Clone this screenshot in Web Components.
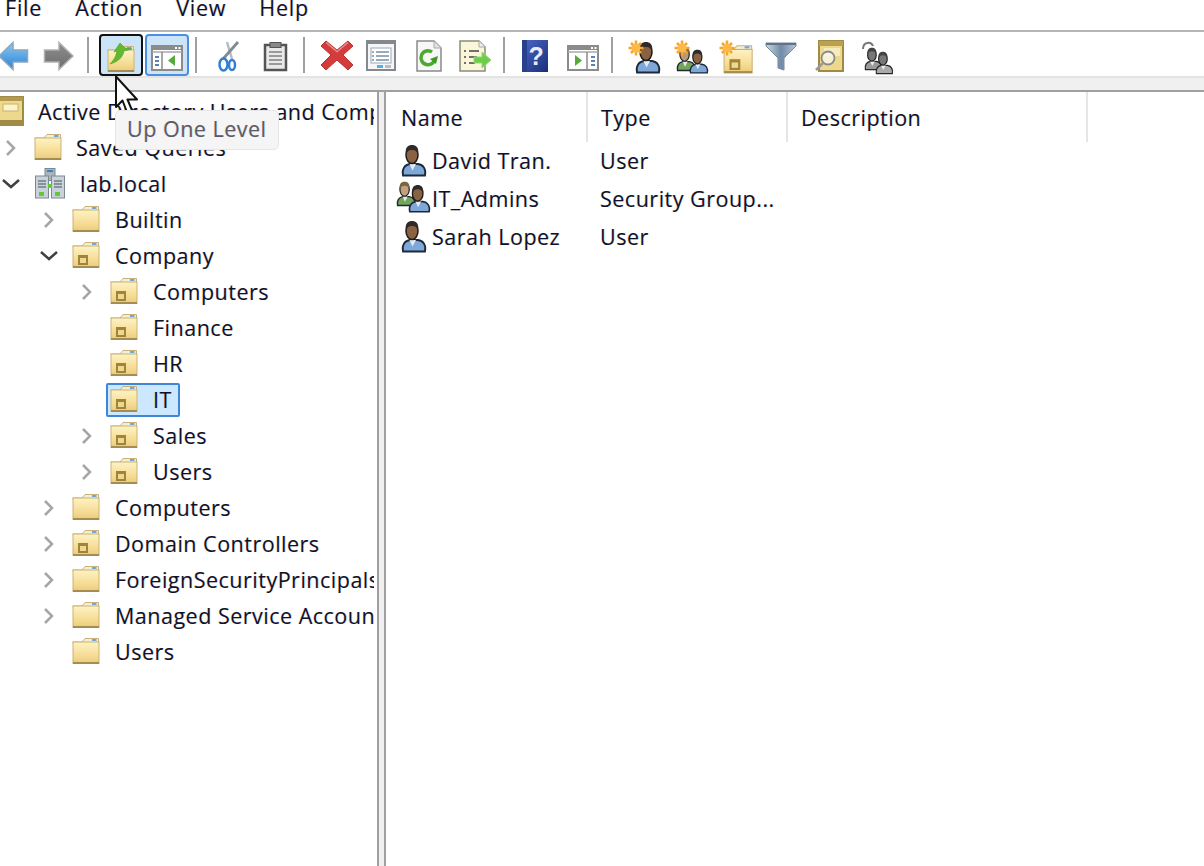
<!DOCTYPE html>
<html lang="en">
<head>
<meta charset="utf-8">
<title>Active Directory Users and Computers</title>
<style>
    html, body { margin: 0; height: 100%; background: #fff; overflow: hidden; }
    body {
        font-family: "Open Sans", "Noto Sans", "Liberation Sans", sans-serif;
        font-size: 21.5px;
        letter-spacing: .5px;
        color: #10102a;
        text-shadow: -.6px 0 rgba(255, 150, 0, .28), .6px 0 rgba(0, 130, 255, .28);
    }
</style>
</head>
<body>
<ad-console></ad-console>

<template id="console-template">
    <style>
        :host { display: flex; flex-direction: column; height: 866px; position: relative; overflow: hidden; }
        .panes { flex: 1; display: flex; min-height: 0; }
        .tree-pane { width: 374px; padding-right: 3px; border-right: 2px solid #a0a0a0; overflow: hidden; }
        .splitter { width: 5px; background: #f0f0f0; }
        .list-pane { flex: 1; border-left: 2px solid #a0a0a0; overflow: hidden; }
    </style>
    <ad-menu-bar>
        <ad-menu-item>File</ad-menu-item>
        <ad-menu-item>Action</ad-menu-item>
        <ad-menu-item>View</ad-menu-item>
        <ad-menu-item>Help</ad-menu-item>
    </ad-menu-bar>
    <ad-tool-bar>
        <ad-tool-button icon="back"></ad-tool-button>
        <ad-tool-button icon="forward"></ad-tool-button>
        <ad-tool-sep></ad-tool-sep>
        <ad-tool-button icon="up" state="focused"></ad-tool-button>
        <ad-tool-button icon="panel" state="checked"></ad-tool-button>
        <ad-tool-sep></ad-tool-sep>
        <ad-tool-button icon="cut"></ad-tool-button>
        <ad-tool-button icon="clipboard"></ad-tool-button>
        <ad-tool-sep></ad-tool-sep>
        <ad-tool-button icon="delete"></ad-tool-button>
        <ad-tool-button icon="props"></ad-tool-button>
        <ad-tool-button icon="refresh"></ad-tool-button>
        <ad-tool-button icon="export"></ad-tool-button>
        <ad-tool-sep></ad-tool-sep>
        <ad-tool-button icon="help"></ad-tool-button>
        <ad-tool-button icon="panel2"></ad-tool-button>
        <ad-tool-sep></ad-tool-sep>
        <ad-tool-button icon="newuser"></ad-tool-button>
        <ad-tool-button icon="newgroup"></ad-tool-button>
        <ad-tool-button icon="newou"></ad-tool-button>
        <ad-tool-button icon="filter"></ad-tool-button>
        <ad-tool-button icon="find"></ad-tool-button>
        <ad-tool-button icon="addgroup"></ad-tool-button>
    </ad-tool-bar>
    <div class="panes">
        <div class="tree-pane">
            <ad-tree>
                <ad-tree-row level="-1" icon="root">Active Directory Users and Computers</ad-tree-row>
                <ad-tree-row level="0" arrow="closed" icon="folder">Saved Queries</ad-tree-row>
                <ad-tree-row level="0" arrow="open" icon="domain">lab.local</ad-tree-row>
                <ad-tree-row level="1" arrow="closed" icon="folder">Builtin</ad-tree-row>
                <ad-tree-row level="1" arrow="open" icon="ou">Company</ad-tree-row>
                <ad-tree-row level="2" arrow="closed" icon="ou">Computers</ad-tree-row>
                <ad-tree-row level="2" icon="ou">Finance</ad-tree-row>
                <ad-tree-row level="2" icon="ou">HR</ad-tree-row>
                <ad-tree-row level="2" icon="ou" selected>IT</ad-tree-row>
                <ad-tree-row level="2" arrow="closed" icon="ou">Sales</ad-tree-row>
                <ad-tree-row level="2" arrow="closed" icon="ou">Users</ad-tree-row>
                <ad-tree-row level="1" arrow="closed" icon="folder">Computers</ad-tree-row>
                <ad-tree-row level="1" arrow="closed" icon="ou">Domain Controllers</ad-tree-row>
                <ad-tree-row level="1" arrow="closed" icon="folder">ForeignSecurityPrincipals</ad-tree-row>
                <ad-tree-row level="1" arrow="closed" icon="folder">Managed Service Accounts</ad-tree-row>
                <ad-tree-row level="1" icon="folder">Users</ad-tree-row>
            </ad-tree>
        </div>
        <div class="splitter"></div>
        <div class="list-pane">
            <ad-list-header></ad-list-header>
            <ad-list-row icon="user" type="User">David Tran.</ad-list-row>
            <ad-list-row icon="group" type="Security Group...">IT_Admins</ad-list-row>
            <ad-list-row icon="user" type="User">Sarah Lopez</ad-list-row>
        </div>
    </div>
    <ad-cursor></ad-cursor>
    <ad-tooltip>Up One Level</ad-tooltip>
</template>

<script>
// one person of the user / group icons, drawn in a 26x32 box
function person(x, y, s, body, hair, skin) {
    return `<g transform="translate(${x} ${y}) scale(${s})">
        <path d="M2 31.500C.5 25 4 20.500 9 20h8c5 .5 8.500 5 7 11.500z" fill="${body}" stroke="#1e2836" stroke-width="1.800"/>
        <path d="M8.500 20l3 6.500 3.500-6.500z" fill="#e3ebf4"/>
        <ellipse cx="11" cy="11" rx="6" ry="8.500" fill="${skin}" stroke="#1a1a1a" stroke-width="1.500"/>
        <path d="M5 11C3.500 3 7.500 1 11 1s7.500 2 6 10c-1-4-3-5-6-5S6 7 5 11z" fill="${hair}"/>
    </g>`;
}

function sparkle(x, y) {
    return `<g transform="translate(${x} ${y})" stroke="#f7a52a" stroke-width="2.500">
        <path d="M0-7.500V7.500M-7.500 0H7.500M-5-5L5 5M-5 5L5-5"/>
        <circle r="4.500" fill="#fdb94a" stroke="none"/>
    </g>`;
}

const folderDefs = `<linearGradient id="fg" x1="0" y1="0" x2="0" y2="1">
    <stop offset="0" stop-color="#fef3c4"/><stop offset=".6" stop-color="#f6dd96"/><stop offset="1" stop-color="#eacb7c"/>
</linearGradient>`;

function folderBody() {
    return `<path d="M1 6h9l3-3.500h13.500V7H1z" fill="#f5edd0" stroke="#c7b27a"/>
        <rect x="20" y="3" width="4.500" height="2" fill="#6fa8dc"/>
        <rect x="1" y="6" width="26" height="21.500" fill="url(#fg)" stroke="#cdb273"/>
        <rect x="1" y="26" width="26" height="2" fill="#a58c52"/>`;
}

const ouMark = `<rect x="6" y="15" width="10" height="10" fill="#a08438"/><rect x="8" y="18" width="6" height="5" fill="#ecd98f"/>`;

const ICONS = {
    back: [32, `<defs><linearGradient id="b" x1="0" y1="0" x2="0" y2="1"><stop offset="0" stop-color="#8cc8f2"/><stop offset="1" stop-color="#2b83d3"/></linearGradient></defs>
        <path d="M16 2.500L2 16l14 13.500V22h14.500V10H16z" fill="url(#b)" stroke="#8aa6c0" stroke-width="1.500"/>`],
    forward: [32, `<defs><linearGradient id="f" x1="0" y1="0" x2="0" y2="1"><stop offset="0" stop-color="#8e8e8e"/><stop offset="1" stop-color="#6d6d6d"/></linearGradient></defs>
        <path d="M16 2.500L30 16 16 29.500V22H1.500V10H16z" fill="url(#f)" stroke="#b0b0b0" stroke-width="1.500"/>`],
    up: [32, `<defs>${folderDefs}</defs><g transform="translate(2 4)">${folderBody()}</g>
        <path d="M5 24c3-3 6-7 7-13l-3 1 6-9 5 5 7 1-8 2c-1 6-6 11-14 13z" fill="#62b830" stroke="#4c9e24" stroke-width=".6"/>`],
    panel: [32, `<rect x="1" y="6" width="30" height="24" fill="#fff" stroke="#8b8b8b" stroke-width="2"/>
        <rect x="1" y="6" width="30" height="4" fill="#8b8b8b"/><rect x="24" y="7" width="2" height="2" fill="#fff"/><rect x="27.500" y="7" width="2" height="2" fill="#fff"/>
        <path d="M1 12h30" stroke="#a8a8a8" stroke-width="1.500"/><path d="M11 12v17" stroke="#8b8b8b" stroke-width="1.500"/>
        <path d="M4 17h4M4 21h4M4 25h4" stroke="#5a84b8" stroke-width="2"/><path d="M24 15v11l-7-5.500z" fill="#55aa3a"/>`],
    panel2: [32, `<rect x="1" y="6" width="30" height="24" fill="#fff" stroke="#8b8b8b" stroke-width="2"/>
        <rect x="1" y="6" width="30" height="4" fill="#8b8b8b"/><rect x="24" y="7" width="2" height="2" fill="#fff"/><rect x="27.500" y="7" width="2" height="2" fill="#fff"/>
        <path d="M1 12h30" stroke="#a8a8a8" stroke-width="1.500"/><path d="M20 12v17" stroke="#8b8b8b" stroke-width="1.500"/>
        <path d="M24 17h4M24 21h4M24 25h4" stroke="#5a84b8" stroke-width="2"/><path d="M8 15v11l7-5.500z" fill="#55aa3a"/>`],
    cut: [32, `<path d="M14 2l5 17" stroke="#b4bcc6" stroke-width="2.500"/><path d="M25 2L10 19" stroke="#7f8a98" stroke-width="2.800"/>
        <g fill="none" stroke="#2f7fd6" stroke-width="2.500"><ellipse cx="10.500" cy="24.500" rx="4" ry="6"/><ellipse cx="19" cy="25" rx="3" ry="5"/></g>`],
    clipboard: [32, `<rect x="6" y="5" width="21" height="25" fill="#e9e9e9" stroke="#555" stroke-width="2.500"/>
        <rect x="11" y="2.500" width="11" height="5" fill="#888" stroke="#555"/>
        <path d="M10 12h13M10 16h13M10 20h13M10 24h13" stroke="#9a9a9a" stroke-width="2"/>`],
    delete: [34, `<path d="M6 1l11 9 11-9 5 5-10 9 10 10-5 5-11-10L6 30l-5-5 10-10L1 6z" fill="#d43c3c" stroke="#b33" stroke-width="1"/>
        <path d="M6 2.500l11 9 11-9" fill="none" stroke="#ee8a8a" stroke-width="1.500"/>`],
    props: [32, `<g transform="translate(-2 0)"><rect x="2" y="1" width="28" height="29" fill="#f4f6f8" stroke="#85888c" stroke-width="2"/>
        <rect x="2" y="1" width="28" height="3" fill="#85888c"/>
        <rect x="6" y="8" width="20" height="15" fill="#fff" stroke="#9aa7b5"/>
        <path d="M7 12h2M11 12h13M7 16h2M11 16h13M7 20h2M11 20h13" stroke="#7a8fa8" stroke-width="1.400"/>
        <rect x="12" y="25" width="6" height="3" fill="#56b0e8"/><rect x="20" y="25" width="6" height="3" fill="#b9bcc0"/></g>`],
    refresh: [32, `<path d="M4 1h17l7 7v23H4z" fill="#f7f7f7" stroke="#8a8a8a" stroke-width="1.500"/><path d="M21 1v7h7" fill="#e2e2e2" stroke="#a8a8a8"/>
        <path d="M22 18a7 7 0 1 1-3-6" fill="none" stroke="#4cab2f" stroke-width="3.500"/><path d="M25 16l-2 8-6-5z" fill="#3f9a26"/>`],
    export: [34, `<path d="M2 1h19l6 6v24H2z" fill="#fbf6da" stroke="#8a8a7a" stroke-width="1.500"/><path d="M21 1v6h6" fill="#eee" stroke="#a8a8a8"/>
        <path d="M6 11h2M11 11h10M6 17h2M11 17h8M6 23h2M11 23h6" stroke="#444" stroke-width="1.500"/>
        <path d="M16 17h8v-5l9 8-9 8v-5h-8z" fill="#6bcf45" stroke="#9ad27e"/>`],
    help: [32, `<defs><linearGradient id="h" x1="0" y1="0" x2="1" y2="1"><stop offset="0" stop-color="#4a69c8"/><stop offset="1" stop-color="#1b2d78"/></linearGradient></defs>
        <g transform="translate(-2 0)"><rect x="3" y="0" width="26" height="32" fill="url(#h)"/><rect x="3" y="0" width="5" height="32" fill="#26408f"/>
        <text x="17.500" y="25" text-anchor="middle" style="text-shadow:none" font-family="Liberation Sans, sans-serif" font-weight="700" font-size="25" fill="#e8ecf8">?</text></g>`],
    newuser: [34, `${person(7, 1, 1, '#7ea8d8', '#2f2a28', '#8a6243')}${sparkle(8, 8)}`],
    newgroup: [34, `${person(2, 6, .78, '#73a55a', '#77663f', '#b89a78')}${person(15, 9, .76, '#7ea8d8', '#2f2a28', '#8a6243')}${sparkle(8, 8)}`],
    newou: [34, `<defs>${folderDefs}</defs><g transform="translate(3 3) scale(1.080)">${folderBody()}${ouMark}</g>${sparkle(7, 8)}`],
    filter: [32, `<defs><linearGradient id="fn" x1="0" y1="0" x2="1" y2="0"><stop offset="0" stop-color="#cfd8e2"/><stop offset=".5" stop-color="#6f8ba8"/><stop offset="1" stop-color="#b8c6d4"/></linearGradient></defs>
        <g transform="translate(-2 0)"><path d="M1 3h30v3L19 18v12l-6-2V18L1 6z" fill="url(#fn)" stroke="#74889c"/><path d="M1 4h30" stroke="#5f7488" stroke-width="2"/></g>`],
    find: [32, `<rect x="6" y="1" width="24" height="30" fill="#ecd98b" stroke="#a18a45" stroke-width="2"/><rect x="6" y="1" width="24" height="5" fill="#bda04e"/>
        <rect x="11" y="8" width="16" height="8" fill="#f6ebbc"/>
        <circle cx="15" cy="18" r="6.500" fill="#f7f6ee" fill-opacity=".8" stroke="#8a8a8a" stroke-width="1.800"/>
        <path d="M10 23l-7 7" stroke="#9a9a9a" stroke-width="2.500"/>`],
    addgroup: [34, `<path d="M5 9c0-7 8-8 10-3" fill="none" stroke="#777" stroke-width="2"/><g style="filter:grayscale(1)">${person(6, 7, .72, '#9a9a9a', '#444', '#777')}${person(17, 11, .72, '#aaa', '#444', '#777')}</g>`],
    root: [28, `<rect x="1" y="1" width="26" height="28" fill="#edd98c" stroke="#a18a45" stroke-width="2"/><rect x="1" y="1" width="26" height="4" fill="#b39a50"/>
        <rect x="7" y="8" width="15" height="7" fill="#fbf3cf" stroke="#c9b266"/><rect x="2" y="24" width="24" height="4" fill="#a18a45"/>`],
    folder: [28, `<defs>${folderDefs}</defs>${folderBody()}`],
    ou: [28, `<defs>${folderDefs}</defs>${folderBody()}${ouMark}`],
    domain: [32, `<g stroke="#7b8a92" fill="#c9d2d8"><rect x="11" y="0.500" width="10" height="12" fill="#a9b5bc"/>
        <rect x="1.500" y="8" width="13" height="22"/><rect x="17.500" y="8" width="13" height="22"/></g>
        <path d="M4 13h8M4 16h8M4 19h8M20 13h8M20 16h8M20 19h8" stroke="#6f7e86" stroke-width="1.500"/>
        <path d="M13 3h6" stroke="#3f7fc0" stroke-width="2"/>
        <rect x="5" y="24" width="5" height="4" fill="#63c934"/><rect x="21" y="24" width="5" height="4" fill="#63c934"/><rect x="14" y="16" width="4" height="4" fill="#63c934"/>`],
    user: [32, person(2, -1, 1, '#7ea8d8', '#2f2a28', '#8a6243')],
    group: [32, `${person(-3, -2, .78, '#73a55a', '#77663f', '#c0a27e')}${person(9, 1, .88, '#7ea8d8', '#2f2a28', '#8a6243')}`]
};

class AdIcon extends HTMLElement {
    connectedCallback() {
        const [box, art] = ICONS[this.getAttribute('name')];
        const root = this.attachShadow({ mode: 'open' });
        root.innerHTML = `
            <style>:host { display: block; width: ${box}px; height: 32px; flex: none; } svg { display: block; overflow: visible; }</style>
            <svg width="${box}" height="32" viewBox="0 0 ${box} 32" xmlns="http://www.w3.org/2000/svg">${art}</svg>`;
    }
}
customElements.define('ad-icon', AdIcon);

class AdMenuBar extends HTMLElement {
    constructor() {
        super();
        this.attachShadow({ mode: 'open' }).innerHTML = `
            <style>
                :host { display: flex; gap: 33px; height: 30px; padding-left: 5px; background: #fff; border-bottom: 2px solid #b4b4b4; overflow: hidden; letter-spacing: .8px; }
            </style>
            <slot></slot>`;
    }
}
customElements.define('ad-menu-bar', AdMenuBar);

class AdMenuItem extends HTMLElement {
    constructor() {
        super();
        this.attachShadow({ mode: 'open' }).innerHTML = `
            <style>:host { display: block; margin-top: -6px; line-height: 28px; }</style>
            <slot></slot>`;
    }
}
customElements.define('ad-menu-item', AdMenuItem);

class AdToolBar extends HTMLElement {
    constructor() {
        super();
        this.attachShadow({ mode: 'open' }).innerHTML = `
            <style>
                :host { display: block; background: #f0f0f0; height: 58px; border-bottom: 2px solid #a0a0a0; overflow: hidden; }
                .row { display: flex; gap: 2px; height: 46px; padding-top: 2px; margin-left: -9px; align-items: center; background: #fff; border-bottom: 2px solid #e3e3e3; box-sizing: border-box; }
            </style>
            <div class="row"><slot></slot></div>`;
    }
}
customElements.define('ad-tool-bar', AdToolBar);

class AdToolButton extends HTMLElement {
    connectedCallback() {
        const root = this.attachShadow({ mode: 'open' });
        root.innerHTML = `
            <style>
                :host { display: flex; width: 44px; height: 42px; flex: none; box-sizing: border-box; align-items: center; justify-content: center; border-radius: 4px; }
                :host([state="focused"]) { background: #cce4f7; border: 2px solid #111; }
                :host([state="checked"]) { background: #cce4f7; border: 2px solid #4a90e2; }
                ad-icon { margin-top: 2px; }
            </style>
            <ad-icon name="${this.getAttribute('icon')}"></ad-icon>`;
    }
}
customElements.define('ad-tool-button', AdToolButton);

class AdToolSep extends HTMLElement {
    constructor() {
        super();
        this.attachShadow({ mode: 'open' }).innerHTML = `
            <style>:host { display: block; flex: none; width: 2px; height: 36px; margin: 0 8px 0 4px; background: #a0a0a0; }</style>`;
    }
}
customElements.define('ad-tool-sep', AdToolSep);

class AdTree extends HTMLElement {
    constructor() {
        super();
        this.attachShadow({ mode: 'open' }).innerHTML = `
            <style>:host { display: block; padding-top: 2px; overflow: hidden; }</style>
            <slot></slot>`;
    }
}
customElements.define('ad-tree', AdTree);

class AdTreeRow extends HTMLElement {
    connectedCallback() {
        const level = Number(this.getAttribute('level'));
        const arrow = this.getAttribute('arrow');
        const glyphs = {
            closed: '<path d="M7 4l7 7-7 7" fill="none" stroke="#a6a6a6" stroke-width="2.500"/>',
            open: '<path d="M3 7l8 7 8-7" fill="none" stroke="#404040" stroke-width="2.500"/>'
        };
        const root = this.attachShadow({ mode: 'open' });
        root.innerHTML = `
            <style>
                :host { display: block; height: 36px; white-space: nowrap; }
                .inner { display: flex; align-items: center; height: 36px; margin-left: ${level * 38}px; }
                .arrow { width: 22px; height: 22px; flex: none; margin-right: 8px; }
                .item { display: flex; align-items: center; gap: ${level > 0 ? 15 : 14}px; height: 30px; padding: 0 6px 0 2px; border: 2px solid transparent; border-radius: 2px; }
                .item span { margin-bottom: 2px; }
                :host([selected]) .item { background: #cce8ff; border-color: #3f86d8; }
            </style>
            <div class="inner">
                <svg class="arrow" viewBox="0 0 22 22">${arrow ? glyphs[arrow] : ''}</svg>
                <div class="item">
                    <ad-icon name="${this.getAttribute('icon')}"></ad-icon>
                    <span><slot></slot></span>
                </div>
            </div>`;
    }
}
customElements.define('ad-tree-row', AdTreeRow);

class AdListHeader extends HTMLElement {
    constructor() {
        super();
        this.attachShadow({ mode: 'open' }).innerHTML = `
            <style>
                :host { display: flex; height: 50px; }
                div { box-sizing: border-box; width: 200px; padding: 11px 0 0 13px; border-right: 2px solid #e5e5e5; line-height: 30px; }
                div:first-of-type { width: 202px; padding-left: 15px; }
                div:last-of-type { width: 300px; }
            </style>
            <div>Name</div><div>Type</div><div>Description</div>`;
    }
}
customElements.define('ad-list-header', AdListHeader);

class AdListRow extends HTMLElement {
    connectedCallback() {
        const root = this.attachShadow({ mode: 'open' });
        root.innerHTML = `
            <style>
                :host { display: grid; grid-template-columns: 214px 1fr; height: 38px; align-items: center; white-space: nowrap; }
                .name { display: flex; align-items: center; gap: 1px; padding-left: 13px; }
                span, .type { margin-bottom: 2px; }
            </style>
            <div class="name"><ad-icon name="${this.getAttribute('icon')}"></ad-icon><span><slot></slot></span></div>
            <div class="type">${this.getAttribute('type')}</div>`;
    }
}
customElements.define('ad-list-row', AdListRow);

class AdTooltip extends HTMLElement {
    constructor() {
        super();
        this.attachShadow({ mode: 'open' }).innerHTML = `
            <style>
                :host { position: absolute; left: 115px; top: 110px; width: 164px; height: 40px; box-sizing: border-box; padding-left: 11px; background: #f5f5f5; border: 1px solid #e6e6e6; border-radius: 5px; color: #5a5a68; line-height: 36px; white-space: nowrap; }
            </style>
            <slot></slot>`;
    }
}
customElements.define('ad-tooltip', AdTooltip);

class AdCursor extends HTMLElement {
    constructor() {
        super();
        this.attachShadow({ mode: 'open' }).innerHTML = `
            <style>:host { position: absolute; left: 114px; top: 75px; width: 26px; height: 42px; } svg { display: block; }</style>
            <svg width="26" height="42" viewBox="0 0 26 42">
                <path d="M2 1.500V32l6.500-6.500 5 13 5-2-5-12H23z" fill="#fff" stroke="#111" stroke-width="2" stroke-linejoin="round"/>
            </svg>`;
    }
}
customElements.define('ad-cursor', AdCursor);

class AdConsole extends HTMLElement {
    constructor() {
        super();
        const template = document.getElementById('console-template');
        this.attachShadow({ mode: 'open' }).appendChild(template.content.cloneNode(true));
    }
}
customElements.define('ad-console', AdConsole);
</script>
</body>
</html>
